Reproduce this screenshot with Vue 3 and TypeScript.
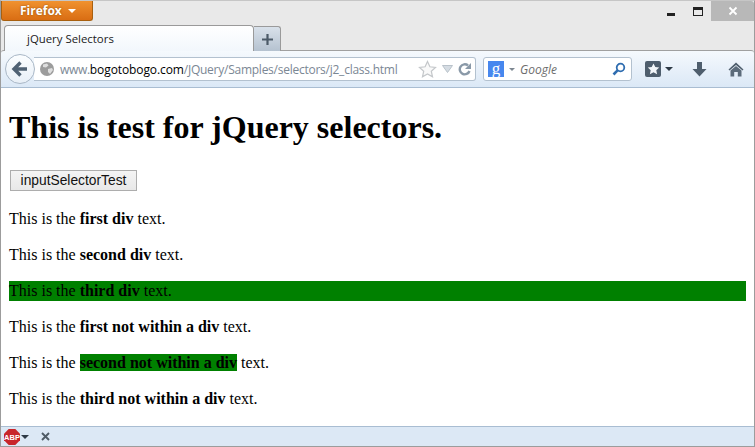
<template>
  <div class="window">
    <header class="titlebar">
      <div class="firefox-button">
        <span>Firefox</span>
        <i class="firefox-caret"></i>
      </div>
      <div class="window-controls">
        <span class="win-min"></span>
        <span class="win-max"></span>
        <span class="win-close">
          <svg width="10" height="10" viewBox="0 0 10 10"><path d="M1.500 1.500l7 7M8.500 1.500l-7 7" stroke="#fff" stroke-width="1.800" fill="none" /></svg>
        </span>
      </div>
    </header>

    <div class="tabstrip">
      <div class="tab">jQuery Selectors</div>
      <div class="new-tab">
        <svg width="13" height="13" viewBox="0 0 13 13"><path d="M6.500 1v11M1 6.500h11" stroke="#4c5a68" stroke-width="2.200" fill="none" /></svg>
      </div>
    </div>

    <nav class="toolbar">
      <div class="back-button">
        <svg width="18" height="18" viewBox="0 0 18 18"><path d="M9.500 2.500L3 9l6.500 6.500M3.500 9H16" stroke="#4f6173" stroke-width="3.400" fill="none" /></svg>
      </div>
      <div class="urlbar">
        <svg class="globe" width="16" height="16" viewBox="0 0 16 16">
          <circle cx="8" cy="8" r="7" fill="#9c9c9c" />
          <path d="M4 3.500l4-1 1.500 2-2.500 2-3-.5zM9 8l4-1 1 2-3 4-2-2z" fill="#dedede" />
        </svg>
        <span class="url"><span class="url-www">www.</span><span class="url-host">bogotobogo.com</span><span class="url-dim">/JQuery/Samples/selectors/j2_class.html</span></span>
        <svg class="star" width="19" height="18" viewBox="0 0 19 18"><path d="M9.500 1.500l2.400 5.300 5.600.6-4.200 3.800 1.200 5.600-5-2.900-5 2.900 1.200-5.600L1.500 7.400l5.600-.6z" fill="#f9f9f9" stroke="#c4c7ca" stroke-width="1.200" /></svg>
        <svg class="drop" width="11" height="8" viewBox="0 0 11 8"><path d="M.5.5h10L5.500 7.500z" fill="#d5dce3" stroke="#b9c2ca" /></svg>
        <svg class="reload" width="14" height="14" viewBox="0 0 14 14"><path d="M11.500 9a5 5 0 1 1-1.500-5.500" stroke="#8a99a8" stroke-width="2.400" fill="none" /><path d="M13 1v6H7z" fill="#8a99a8" /></svg>
      </div>
      <div class="searchbar">
        <span class="engine">
          <span class="engine-logo">g</span>
          <i class="mini-caret"></i>
        </span>
        <span class="search-text">Google</span>
        <svg class="lens" width="14" height="14" viewBox="0 0 14 14"><circle cx="8.500" cy="5.500" r="3.800" stroke="#2f6db0" stroke-width="1.800" fill="#fff" /><path d="M5.800 8.200L1.500 12.500" stroke="#2f6db0" stroke-width="2.600" /></svg>
      </div>
      <div class="bookmarks">
        <span class="bookmark-box">
          <svg width="13" height="12" viewBox="0 0 13 12"><path d="M6.500.5l1.800 3.600 3.900.5-2.900 2.700.8 3.900-3.600-2-3.600 2 .8-3.900L.8 4.600l3.900-.5z" fill="#f3f6f9" /></svg>
        </span>
        <i class="bookmark-caret"></i>
      </div>
      <svg class="download" width="15" height="15" viewBox="0 0 15 15"><path d="M5 0h5v7h4.500L7.500 14.500.5 7H5z" fill="#4f5e6d" /></svg>
      <svg class="home" width="16" height="15" viewBox="0 0 16 15"><path d="M8 .5L.5 7.500l1 1L8 3l6.500 5.500 1-1z" fill="#4f5e6d" /><path d="M2.500 8.500L8 4l5.500 4.500V14.500H9.800V10H6.200v4.500H2.500z" fill="#5c6b7a" /></svg>
    </nav>

    <main class="page">
      <h1>This is test for jQuery selectors.</h1>
      <button class="test-button" type="button">inputSelectorTest</button>
      <p v-for="row in rows" :key="row.label" :class="{ highlight: row.whole }">
        This is the <b :class="{ highlight: row.inner }">{{ row.label }}</b> text.
      </p>
    </main>

    <footer class="addon-bar">
      <svg width="16" height="16" viewBox="0 0 16 16">
        <path d="M4.700 0h6.600L16 4.700v6.600L11.300 16H4.700L0 11.300V4.700z" fill="#c8262b" />
        <text x="8" y="11" text-anchor="middle" class="abp-text">ABP</text>
      </svg>
      <i class="addon-caret"></i>
      <svg class="addon-close" width="9" height="9" viewBox="0 0 9 9"><path d="M1 1l7 7M8 1L1 8" stroke="#4f5b66" stroke-width="1.900" fill="none" /></svg>
    </footer>
  </div>
</template>

<script setup lang="ts">
interface Row {
  label: string;
  whole?: boolean;
  inner?: boolean;
}

const rows: Row[] = [
  { label: 'first div' },
  { label: 'second div' },
  { label: 'third div', whole: true },
  { label: 'first not within a div' },
  { label: 'second not within a div', inner: true },
  { label: 'third not within a div' },
];
</script>

<style>
html,
body {
  margin: 0;
  height: 100%;
  overflow: hidden;
}
#app {
  height: 100%;
}
</style>

<style scoped>
.window {
  display: flex;
  flex-direction: column;
  height: 447px;
  box-sizing: border-box;
  background: #e9e9e9;
  border-top: 1px solid #c6c6c6;
  border-left: 1px solid #9c9c9c;
  border-right: 1px solid #9c9c9c;
  border-bottom: 1px solid #9c9c9c;
  font-family: 'Open Sans', 'Liberation Sans', sans-serif;
  overflow: hidden;
}

.titlebar {
  display: flex;
  justify-content: space-between;
  height: 24px;
  flex: none;
}

.firefox-button {
  display: flex;
  align-items: center;
  gap: 6px;
  width: 92px;
  height: 20px;
  box-sizing: border-box;
  padding: 0 0 0 18px;
  background: linear-gradient(#f0922f, #d96d13);
  border: 1px solid #a8600f;
  border-top: none;
  border-radius: 0 0 3px 3px;
  color: #fff;
  font-size: 12px;
  font-weight: 700;
  text-shadow: 0 0 2px #8a4a08;
}

.firefox-caret {
  border-left: 4px solid transparent;
  border-right: 4px solid transparent;
  border-top: 4px solid #fff;
}

.window-controls {
  display: flex;
  align-items: flex-start;
  height: 20px;
}

.win-min {
  width: 8px;
  height: 3px;
  margin-top: 12px;
  background: #222;
}

.win-max {
  width: 8px;
  height: 5px;
  margin: 6px 8px 0 18px;
  border: 1px solid #222;
  border-top-width: 3px;
}

.win-close {
  display: flex;
  align-items: center;
  justify-content: center;
  width: 43px;
  height: 20px;
  background: #b8b8b8;
  border-radius: 0 3px 0 0;
}

.tabstrip {
  display: flex;
  align-items: flex-end;
  height: 26px;
  flex: none;
  padding-left: 3px;
  margin-bottom: -1px;
  position: relative;
  z-index: 1;
}

.tab {
  display: flex;
  align-items: center;
  width: 250px;
  height: 26px;
  box-sizing: border-box;
  padding-left: 22px;
  background: linear-gradient(#ffffff, #f2f7fc);
  border: 1px solid #9a9a9a;
  border-bottom: none;
  border-radius: 4px 4px 0 0;
  color: #1a1a1a;
  font-size: 11.4px;
}

.new-tab {
  display: flex;
  align-items: center;
  justify-content: center;
  width: 27px;
  height: 25px;
  box-sizing: border-box;
  background: linear-gradient(#d9e1ea, #b5c2d0);
  border: 1px solid #9a9a9a;
  border-left: none;
  border-bottom: none;
  border-radius: 0 3px 0 0;
}

.toolbar {
  display: flex;
  align-items: center;
  height: 38px;
  flex: none;
  box-sizing: border-box;
  padding-left: 4px;
  background: linear-gradient(#f5f9fd, #dbe8f6);
  border-top: 1px solid #a0a0a0;
  border-bottom: 1px solid #a9bdd2;
  border-radius: 3px 3px 0 0;
}

.back-button {
  display: flex;
  align-items: center;
  justify-content: center;
  width: 30px;
  height: 30px;
  flex: none;
  box-sizing: border-box;
  background: linear-gradient(#fbfdff, #e8eff7);
  border: 1px solid #a9b7c6;
  border-radius: 50%;
  position: relative;
  z-index: 1;
}

.urlbar,
.searchbar {
  display: flex;
  align-items: center;
  height: 24px;
  box-sizing: border-box;
  background: #fff;
  border: 1px solid #b3c1cf;
  border-radius: 0 3px 3px 0;
}

.urlbar {
  width: 442px;
  margin-left: -1px;
  border-left: none;
  padding-right: 3px;
}

.globe {
  margin-left: 5px;
  flex: none;
}

.url {
  flex: 1;
  margin-left: 5px;
  padding-top: 1px;
  font-size: 12px;
  white-space: nowrap;
}

.url-www {
  color: #7b8794;
  letter-spacing: -0.3px;
}

.url-dim {
  color: #7b8794;
  letter-spacing: -0.25px;
}

.url-host {
  color: #000;
  letter-spacing: -0.1px;
}

.drop {
  margin-left: 5px;
}

.reload {
  margin-left: 5px;
}

.searchbar {
  width: 149px;
  margin-left: 7px;
  padding: 0 5px 0 4px;
  border-radius: 3px;
}

.engine {
  display: flex;
  align-items: center;
  gap: 5px;
}

.engine-logo {
  display: flex;
  align-items: center;
  justify-content: center;
  width: 16px;
  height: 16px;
  background: #4787ee;
  color: #fff;
  font-family: 'Liberation Serif', serif;
  font-size: 17px;
  line-height: 16px;
}

.mini-caret {
  border-left: 3px solid transparent;
  border-right: 3px solid transparent;
  border-top: 3px solid #7d8791;
}

.search-text {
  flex: 1;
  margin-left: 5px;
  padding-top: 1px;
  color: #6d6d6d;
  font-size: 12px;
  font-style: italic;
}

.bookmarks {
  display: flex;
  align-items: center;
  gap: 4px;
  margin-left: 13px;
}

.bookmark-box {
  display: flex;
  align-items: center;
  justify-content: center;
  width: 16px;
  height: 16px;
  background: #4f5e6d;
  border-radius: 2px;
}

.bookmark-caret {
  border-left: 4px solid transparent;
  border-right: 4px solid transparent;
  border-top: 4px solid #2e3a46;
}

.download {
  margin-left: 19px;
}

.home {
  margin-left: 21px;
}

.page {
  flex: 1;
  min-height: 0;
  overflow: hidden;
  padding: 0 8px;
  background: #fff;
  color: #000;
  font-family: 'Liberation Serif', 'Times New Roman', serif;
  font-size: 16px;
}

h1 {
  margin: 21px 0 24px;
  font-size: 32px;
  line-height: 37px;
}

.test-button {
  display: block;
  width: 127px;
  height: 21px;
  margin: 0 1px 18px;
  padding: 0;
  background: linear-gradient(#f4f4f4, #e8e8e8);
  border: 1px solid #adadad;
  color: #111;
  font-family: 'Liberation Sans', Arial, sans-serif;
  font-size: 13.8px;
}

p {
  margin: 16px 0;
  line-height: 20px;
}

.highlight {
  background: #008000;
}

.addon-bar {
  display: flex;
  align-items: center;
  height: 20px;
  flex: none;
  box-sizing: border-box;
  padding-left: 3px;
  background: #dce8f5;
  border-top: 1px solid #a9bdd2;
}

.abp-text {
  fill: #fff;
  font-family: 'Liberation Sans', sans-serif;
  font-size: 7.5px;
  font-weight: 700;
}

.addon-caret {
  margin-left: 1px;
  border-left: 4px solid transparent;
  border-right: 4px solid transparent;
  border-top: 4px solid #2e3a46;
}

.addon-close {
  margin-left: 12px;
}
</style>
